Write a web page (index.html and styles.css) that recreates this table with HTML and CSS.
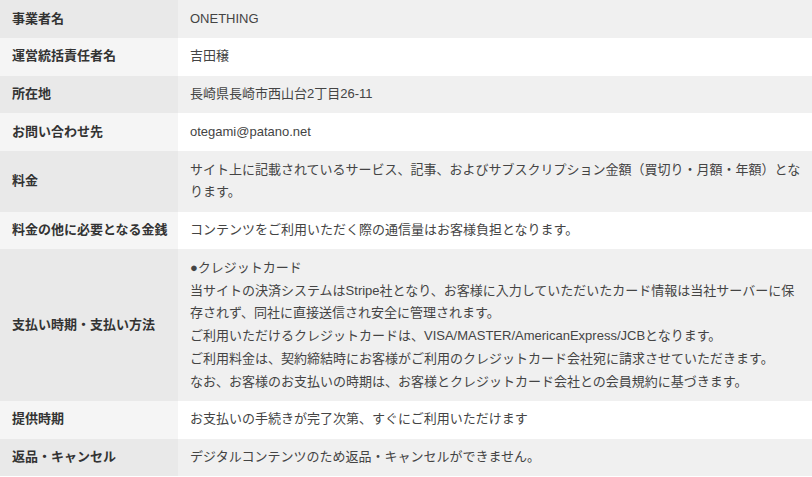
FILE: index.html
```html
<!DOCTYPE html>
<html lang="ja">
<head>
<meta charset="utf-8">
<link rel="stylesheet" href="styles.css">
</head>
<body>
<table class="info">
  <tbody>
    <tr class="row odd"><th class="label">事業者名</th><td class="value">ONETHING</td></tr>
    <tr class="row even"><th class="label">運営統括責任者名</th><td class="value">吉田穣</td></tr>
    <tr class="row odd"><th class="label">所在地</th><td class="value">長崎県長崎市西山台2丁目26-11</td></tr>
    <tr class="row even"><th class="label">お問い合わせ先</th><td class="value">otegami@patano.net</td></tr>
    <tr class="row odd"><th class="label">料金</th><td class="value">サイト上に記載されているサービス、記事、およびサブスクリプション金額（買切り・月額・年額）となります。</td></tr>
    <tr class="row even"><th class="label">料金の他に必要となる金銭</th><td class="value">コンテンツをご利用いただく際の通信量はお客様負担となります。</td></tr>
    <tr class="row odd"><th class="label">支払い時期・支払い方法</th><td class="value">●クレジットカード<br>当サイトの決済システムはStripe社となり、お客様に入力していただいたカード情報は当社サーバーに保存されず、同社に直接送信され安全に管理されます。<br>ご利用いただけるクレジットカードは、VISA/MASTER/AmericanExpress/JCBとなります。<br>ご利用料金は、契約締結時にお客様がご利用のクレジットカード会社宛に請求させていただきます。<br>なお、お客様のお支払いの時期は、お客様とクレジットカード会社との会員規約に基づきます。</td></tr>
    <tr class="row even"><th class="label">提供時期</th><td class="value">お支払いの手続きが完了次第、すぐにご利用いただけます</td></tr>
    <tr class="row odd"><th class="label">返品・キャンセル</th><td class="value">デジタルコンテンツのため返品・キャンセルができません。</td></tr>
  </tbody>
</table>
</body>
</html>
```
FILE: styles.css
```css
html, body {
  margin: 0;
  padding: 0;
  background: #ffffff;
}
body {
  font-family: "Liberation Sans", "Noto Sans CJK JP", sans-serif;
  color: #333333;
}
.info {
  width: 812px;
  border-collapse: collapse;
  border-spacing: 0;
  table-layout: fixed;
}
.label {
  width: 178px;
  box-sizing: border-box;
  padding: 7.5px 4px 7.5px 12px;
  text-align: left;
  vertical-align: middle;
  font-size: 13px;
  font-weight: bold;
  line-height: 22.75px;
  color: #333333;
  white-space: nowrap;
}
.value {
  padding: 7.5px 7px 7.5px 12px;
  font-size: 13px;
  line-height: 22.75px;
  color: #444444;
  vertical-align: middle;
}
.odd .label { background: #e9e9e9; }
.odd .value { background: #f0f0f0; }
.even .label { background: #f5f5f5; }
.even .value { background: #ffffff; }
```
